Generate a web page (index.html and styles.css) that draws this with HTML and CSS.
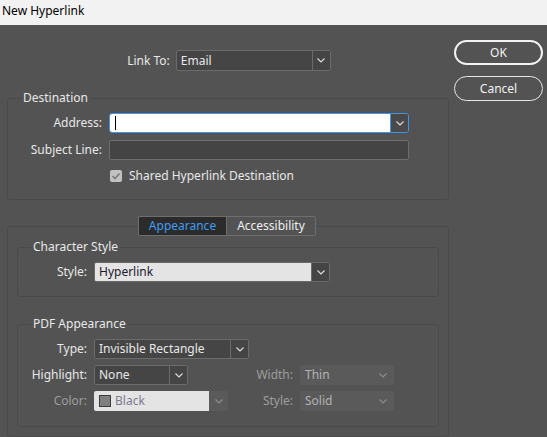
FILE: index.html
```html
<!DOCTYPE html>
<html>
<head>
<meta charset="utf-8">
<link rel="stylesheet" href="styles.css">
</head>
<body>
<div class="titlebar">New Hyperlink</div>
<div class="dialog">
  <div class="main">
    <div class="linkto-row">
      <span class="lbl">Link To:</span>
      <div class="select dark w-link">
        <span class="val">Email</span>
        <span class="arrow"><svg width="8" height="5" viewBox="0 0 8 5"><polyline points="0.5,0.5 4,4 7.5,0.5" fill="none" stroke="#dcdcdc" stroke-width="1.2"/></svg></span>
      </div>
    </div>

    <fieldset class="group dest">
      <legend>Destination</legend>
      <div class="dest-grid">
        <span class="lbl right">Address:</span>
        <div class="select focus">
          <span class="val"><span class="caret"></span></span>
          <span class="arrow"><svg width="8" height="5" viewBox="0 0 8 5"><polyline points="0.5,0.5 4,4 7.5,0.5" fill="none" stroke="#dcdcdc" stroke-width="1.2"/></svg></span>
        </div>
        <span class="lbl right">Subject Line:</span>
        <div class="input"></div>
        <span></span>
        <div class="check-row">
          <span class="checkbox"><svg width="12" height="12" viewBox="0 0 12 12"><polyline points="2.5,6 5,8.5 9.5,3.5" fill="none" stroke="#7a7a7a" stroke-width="1.6"/></svg></span>
          <span class="lbl">Shared Hyperlink Destination</span>
        </div>
      </div>
    </fieldset>

    <div class="tabs">
      <span class="tab active">Appearance</span>
      <span class="tab">Accessibility</span>
    </div>
    <div class="tabpanel">
      <fieldset class="group charstyle">
        <legend>Character Style</legend>
        <div class="cs-grid">
          <span class="lbl right">Style:</span>
          <div class="select light w-style">
            <span class="val">Hyperlink</span>
            <span class="arrow"><svg width="8" height="5" viewBox="0 0 8 5"><polyline points="0.5,0.5 4,4 7.5,0.5" fill="none" stroke="#dcdcdc" stroke-width="1.2"/></svg></span>
          </div>
        </div>
      </fieldset>

      <fieldset class="group pdf">
        <legend>PDF Appearance</legend>
        <div class="pdf-grid">
          <span class="lbl right">Type:</span>
          <div class="select dark w-type span2">
            <span class="val">Invisible Rectangle</span>
            <span class="arrow"><svg width="8" height="5" viewBox="0 0 8 5"><polyline points="0.5,0.5 4,4 7.5,0.5" fill="none" stroke="#dcdcdc" stroke-width="1.2"/></svg></span>
          </div>
          <span></span>

          <span class="lbl right">Highlight:</span>
          <div class="select dark w-hl">
            <span class="val">None</span>
            <span class="arrow"><svg width="8" height="5" viewBox="0 0 8 5"><polyline points="0.5,0.5 4,4 7.5,0.5" fill="none" stroke="#dcdcdc" stroke-width="1.2"/></svg></span>
          </div>
          <span class="lbl right dim">Width:</span>
          <div class="select disabled">
            <span class="val">Thin</span>
            <span class="arrow"><svg width="8" height="5" viewBox="0 0 8 5"><polyline points="0.5,0.5 4,4 7.5,0.5" fill="none" stroke="#8c8c8c" stroke-width="1.2"/></svg></span>
          </div>

          <span class="lbl right dim">Color:</span>
          <div class="select color-dis">
            <span class="val"><span class="swatch"></span>Black</span>
            <span class="arrow"><svg width="8" height="5" viewBox="0 0 8 5"><polyline points="0.5,0.5 4,4 7.5,0.5" fill="none" stroke="#8c8c8c" stroke-width="1.2"/></svg></span>
          </div>
          <span class="lbl right dim">Style:</span>
          <div class="select disabled">
            <span class="val">Solid</span>
            <span class="arrow"><svg width="8" height="5" viewBox="0 0 8 5"><polyline points="0.5,0.5 4,4 7.5,0.5" fill="none" stroke="#8c8c8c" stroke-width="1.2"/></svg></span>
          </div>
        </div>
      </fieldset>
    </div>
  </div>
  <div class="buttons">
    <div class="btn ok">OK</div>
    <div class="btn">Cancel</div>
  </div>
</div>
</body>
</html>
```
FILE: styles.css
```css
* { box-sizing: border-box; }
html, body {
  margin: 0;
  padding: 0;
}
body {
  width: 547px;
  height: 437px;
  overflow: hidden;
  background: #535353;
  font-family: "Noto Sans", "Open Sans", sans-serif;
  font-size: 12px;
  color: #e8e8e8;
}
.titlebar {
  height: 25px;
  background: #f2f2f2;
  color: #000;
  padding: 3px 0 0 2px;
  line-height: 16px;
}
.dialog {
  display: flex;
  padding-left: 7px;
}
.main {
  width: 442px;
}
.buttons {
  width: 89px;
  margin-left: 5px;
  padding-top: 15px;
  display: flex;
  flex-direction: column;
  gap: 11px;
}
.btn {
  height: 25px;
  border: 1px solid #e6e6e6;
  border-radius: 13px;
  display: flex;
  align-items: center;
  justify-content: center;
  color: #f2f2f2;
  font-size: 12px;
}
.btn.ok {
  border: 2px solid #f2f2f2;
}
.lbl { white-space: nowrap; line-height: 16px; }
.lbl.right { text-align: right; }
.lbl.dim { color: #9d9d9d; }

.linkto-row {
  margin-top: 25px;
  display: flex;
  justify-content: center;
  align-items: center;
  gap: 6px;
  height: 21px;
  padding-left: 2px;
}

.select {
  display: flex;
  height: 20px;
  border: 1px solid #6b6b6b;
  border-radius: 2px;
  background: #454545;
  overflow: hidden;
}
.select .val {
  flex: 1;
  display: flex;
  align-items: center;
  padding-left: 4px;
  white-space: nowrap;
  line-height: 16px;
}
.select .arrow {
  width: 18px;
  border-left: 1px solid #6b6b6b;
  display: flex;
  align-items: center;
  justify-content: center;
  background: #454545;
}
.w-link { width: 155px; height: 21px; }
.w-style { width: 236px; }
.w-type { width: 155px; }
.w-hl { width: 94px; }

.select.light .val {
  background: #e4e4e4;
  color: #1c1a2c;
}
.select.focus {
  border-color: #3d95ee;
  border-radius: 3px;
}
.select.focus .val { background: #fff; }
.select.focus .arrow {
  border-left-color: #3d95ee;
  background: #4a4a4a;
}
.caret {
  width: 1px;
  height: 14px;
  background: #000;
  margin-left: 1px;
}

.input {
  height: 20px;
  border: 1px solid #6d6d6d;
  border-radius: 2px;
  background: #444;
}

.select.disabled {
  border: none;
  background: #5a5a5a;
  color: #b4b4b4;
}
.select.disabled .val { padding-left: 5px; }
.select.disabled .arrow {
  border: none;
  background: transparent;
  width: 22px;
}
.select.color-dis {
  border: none;
  background: #5a5a5a;
}
.select.color-dis .val {
  background: #e4e4e4;
  color: #7c7a90;
  padding-left: 5px;
}
.select.color-dis .arrow {
  border: none;
  background: #5a5a5a;
  width: 19px;
}
.swatch {
  width: 12px;
  height: 12px;
  background: #808080;
  border: 1px solid #3c3c3c;
  margin-right: 4px;
}

fieldset.group {
  margin: 0;
  padding: 0;
  border: 1px solid #4a4a4a;
  border-radius: 3px;
  min-width: 0;
}
fieldset.group legend {
  margin-left: 13px;
  padding: 0 2px;
  line-height: 16px;
  color: #e8e8e8;
}
fieldset.dest {
  margin-top: 19px;
  padding-bottom: 14px;
}
.dest-grid {
  margin-top: 7px;
  display: grid;
  grid-template-columns: 94px 300px;
  column-gap: 7px;
  row-gap: 7px;
  align-items: center;
}
.check-row {
  height: 18px;
  display: flex;
  align-items: center;
  padding-left: 1px;
}
.checkbox {
  width: 12px;
  height: 12px;
  background: #c2c2c2;
  border-radius: 2px;
  margin-right: 7px;
  display: flex;
}

.tabs {
  margin-top: 16px;
  display: flex;
  justify-content: center;
  position: relative;
  z-index: 1;
  margin-bottom: -10px;
  padding-right: 2px;
}
.tab {
  height: 20px;
  line-height: 18px;
  border: 1px solid #6e6e6e;
  background: #535353;
  color: #f0f0f0;
  text-align: center;
}
.tab.active {
  width: 88px;
  background: #2b2b2b;
  color: #3f9cf0;
  border-right: none;
  border-radius: 2px 0 0 2px;
}
.tab + .tab {
  width: 90px;
  border-radius: 0 2px 2px 0;
}
.tabpanel {
  border: 1px solid #4a4a4a;
  border-radius: 3px;
  height: 211px;
  padding: 0 9px;
}
fieldset.charstyle {
  margin-top: 12px;
  padding-bottom: 14px;
}
.cs-grid {
  margin-top: 7px;
  display: grid;
  grid-template-columns: 69px 236px;
  column-gap: 7px;
  align-items: center;
}
fieldset.pdf {
  margin-top: 19px;
  padding-bottom: 15px;
}
.pdf-grid {
  margin-top: 7px;
  display: grid;
  grid-template-columns: 69px 134px 58px 94px;
  column-gap: 7px;
  row-gap: 6px;
  align-items: center;
}
.span2 { grid-column: span 2; }
```
